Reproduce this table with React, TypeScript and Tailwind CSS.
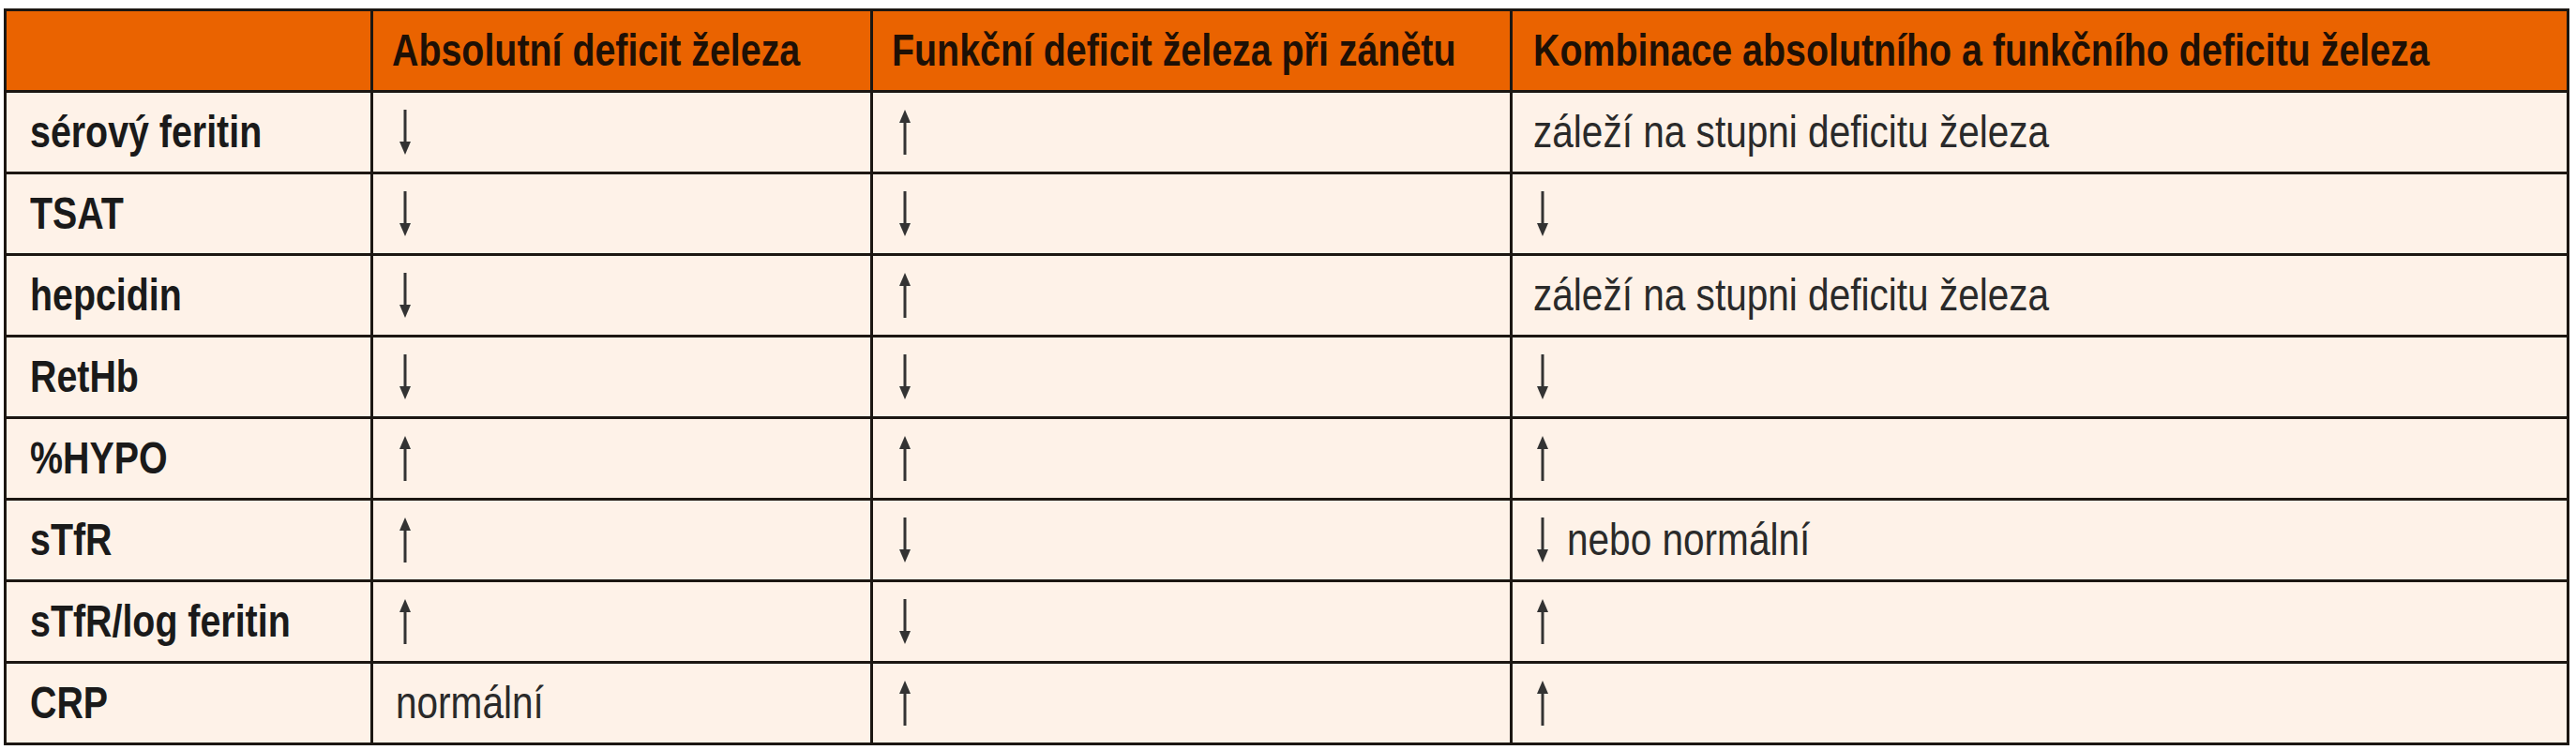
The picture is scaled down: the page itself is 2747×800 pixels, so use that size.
import React from 'react';

type Val = 'up' | 'down' | string;

interface Row {
  label: string;
  absolute: Val;
  functional: Val;
  combined: Val;
  combinedNote?: string;
}

const rows: Row[] = [
  { label: 'sérový feritin', absolute: 'down', functional: 'up', combined: 'záleží na stupni deficitu železa' },
  { label: 'TSAT', absolute: 'down', functional: 'down', combined: 'down' },
  { label: 'hepcidin', absolute: 'down', functional: 'up', combined: 'záleží na stupni deficitu železa' },
  { label: 'RetHb', absolute: 'down', functional: 'down', combined: 'down' },
  { label: '%HYPO', absolute: 'up', functional: 'up', combined: 'up' },
  { label: 'sTfR', absolute: 'up', functional: 'down', combined: 'down', combinedNote: 'nebo normální' },
  { label: 'sTfR/log feritin', absolute: 'up', functional: 'down', combined: 'up' },
  { label: 'CRP', absolute: 'normální', functional: 'up', combined: 'up' },
];

// narrow face isn't installed, so squeeze Liberation Sans horizontally
function Txt({ children, bold }: { children: React.ReactNode; bold?: boolean }) {
  return (
    <span
      className={
        bold
          ? 'inline-block origin-left scale-x-[0.82] whitespace-nowrap font-bold'
          : 'inline-block origin-left scale-x-[0.845] whitespace-nowrap'
      }
    >
      {children}
    </span>
  );
}

function Arrow({ dir }: { dir: 'up' | 'down' }) {
  return (
    <svg width="20" height="48" viewBox="0 0 20 48" className="shrink-0">
      {dir === 'down' ? (
        <g fill="#333">
          <rect x="8.5" y="0" width="3" height="38" />
          <polygon points="4,34 16,34 10,48" />
        </g>
      ) : (
        <g fill="#333">
          <rect x="8.5" y="10" width="3" height="38" />
          <polygon points="4,14 16,14 10,0" />
        </g>
      )}
    </svg>
  );
}

function Cell({ value, note }: { value: Val; note?: string }) {
  if (value === 'up' || value === 'down') {
    return (
      <div className="flex items-center gap-[16px]">
        <Arrow dir={value} />
        {note && <Txt>{note}</Txt>}
      </div>
    );
  }
  return <Txt>{value}</Txt>;
}

const cell = 'border-[3px] border-[#1c1712] overflow-visible';

export default function App() {
  return (
    <div
      className="w-[2747px] h-[800px] bg-white pt-[9px] pl-[4px] overflow-hidden"
      style={{ fontFamily: "'Liberation Sans', Arial, sans-serif" }}
    >
      <table className="w-[2733px] table-fixed border-collapse border-[3px] border-[#1c1712] text-[48px] leading-none">
        <colgroup>
          <col className="w-[391px]" />
          <col className="w-[533px]" />
          <col className="w-[682px]" />
          <col className="w-[1127px]" />
        </colgroup>
        <thead>
          <tr className="h-[87px] bg-[#ea6300] text-[#1e1005] text-left font-normal">
            <th className={`${cell} px-[22px]`}></th>
            <th className={`${cell} px-[20px]`}><Txt bold>Absolutní deficit železa</Txt></th>
            <th className={`${cell} px-[20px]`}><Txt bold>Funkční deficit železa při zánětu</Txt></th>
            <th className={`${cell} px-[22px]`}><Txt bold>Kombinace absolutního a funkčního deficitu železa</Txt></th>
          </tr>
        </thead>
        <tbody>
          {rows.map((r) => (
            <tr key={r.label} className="h-[87px] bg-[#fef2e8] text-[#2a2a2a]">
              <td className={`${cell} px-[25px] text-[#1a1a1a]`}><Txt bold>{r.label}</Txt></td>
              <td className={`${cell} px-[24px]`}><Cell value={r.absolute} /></td>
              <td className={`${cell} px-[24px]`}><Cell value={r.functional} /></td>
              <td className={`${cell} px-[22px]`}><Cell value={r.combined} note={r.combinedNote} /></td>
            </tr>
          ))}
        </tbody>
      </table>
    </div>
  );
}
